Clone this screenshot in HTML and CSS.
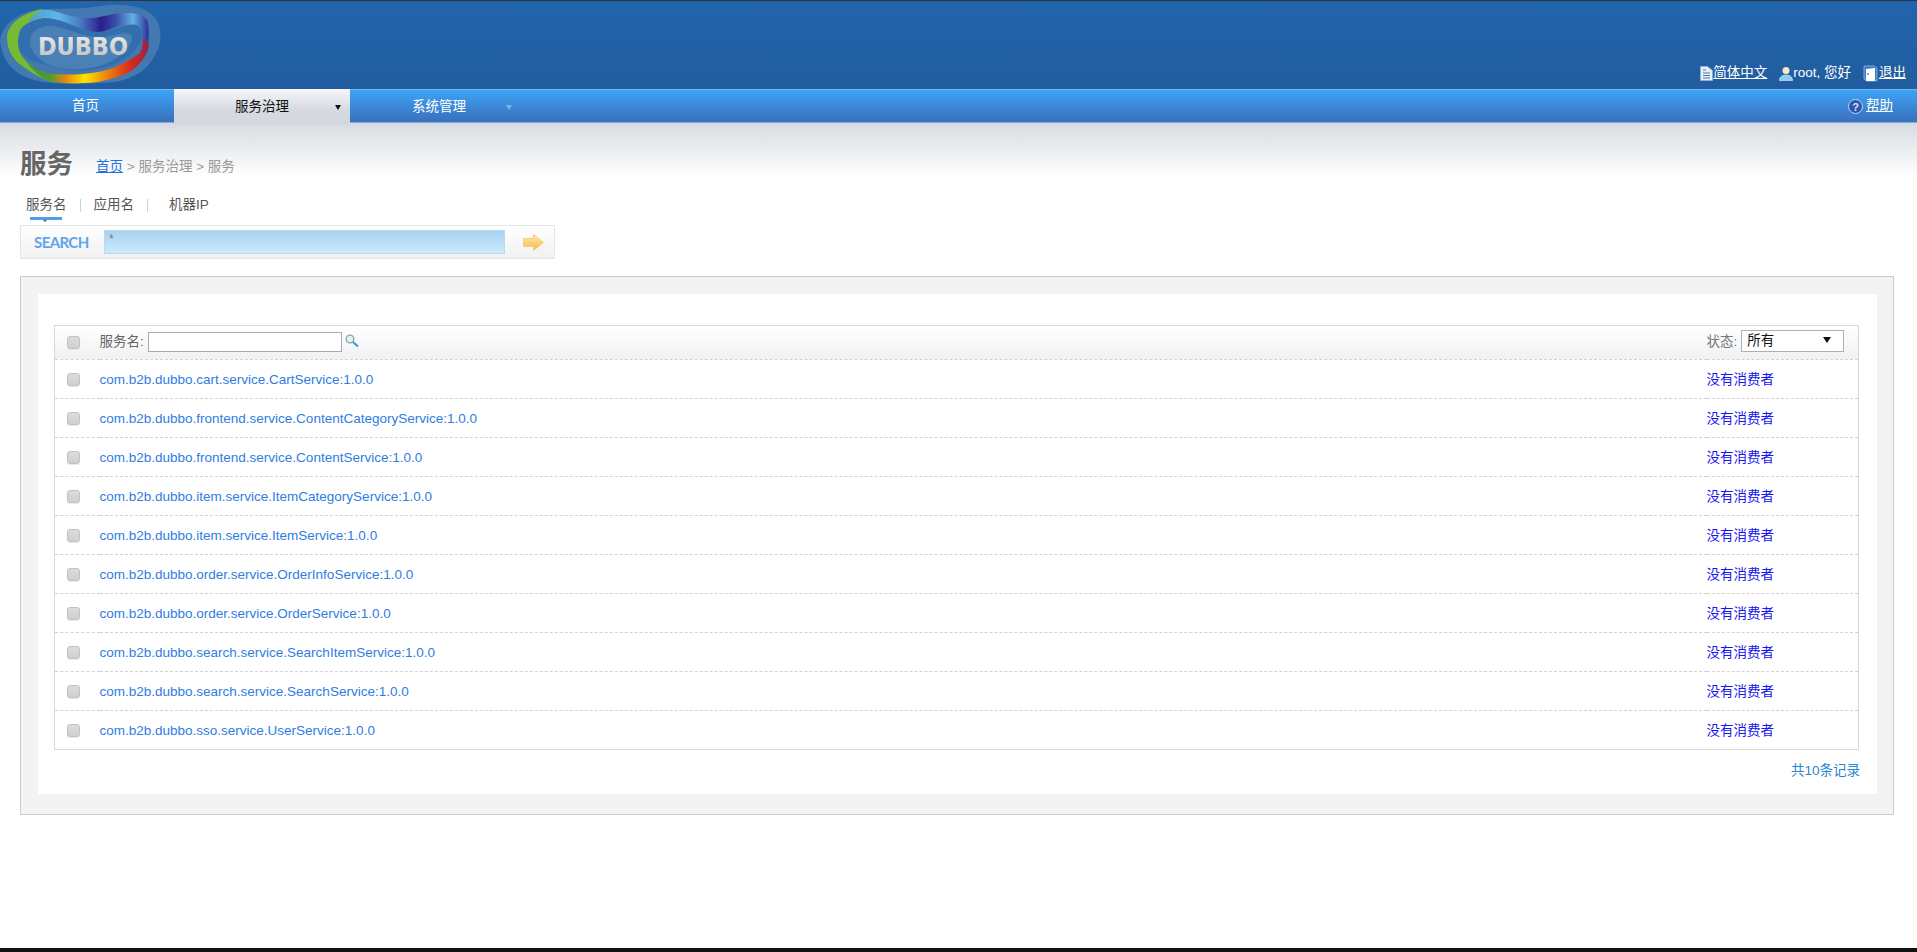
FILE: index.html
```html
<!DOCTYPE html>
<html lang="zh-CN">
<head>
<meta charset="utf-8">
<title>Dubbo Admin</title>
<link rel="stylesheet" href="styles.css">
</head>
<body>
<div class="page">
  <header class="header">
    <svg class="logo" viewBox="0 0 165 88" width="165" height="88" aria-label="Dubbo logo">
      <defs>
        <linearGradient id="ring" x1="25" y1="0" x2="150" y2="0" gradientUnits="userSpaceOnUse">
          <stop offset="0" stop-color="#3d9a38"/>
          <stop offset=".2" stop-color="#4f9a30"/>
          <stop offset=".32" stop-color="#e8860c"/>
          <stop offset=".48" stop-color="#ffe200"/>
          <stop offset=".68" stop-color="#e8760f"/>
          <stop offset=".85" stop-color="#d62a1a"/>
          <stop offset="1" stop-color="#8c2550"/>
        </linearGradient>
        <linearGradient id="band" x1="28" y1="0" x2="150" y2="0" gradientUnits="userSpaceOnUse">
          <stop offset="0" stop-color="#4f9fd0"/>
          <stop offset=".25" stop-color="#5fb6e4"/>
          <stop offset=".42" stop-color="#4a7fc4"/>
          <stop offset=".6" stop-color="#2a1e8c"/>
          <stop offset=".72" stop-color="#3a4fa8"/>
          <stop offset=".86" stop-color="#62b2e2"/>
          <stop offset="1" stop-color="#2a2390"/>
        </linearGradient>
        <linearGradient id="dubboText" x1="0" y1="0" x2="0" y2="1">
          <stop offset="0" stop-color="#f0f0f0"/>
          <stop offset="1" stop-color="#bdbdbd"/>
        </linearGradient>
      </defs>
      <path d="M0 40C3 22 22 10 44 9c20-1 32 1 56-3 20-3 46-1 55 12 9 12 7 30-5 45-12 15-31 20-51 20-24 1-50 2-68-4C12 73 2 60 0 40z" fill="#4378b0"/>
      <path d="M18 43c0-14 8-24 25-25 20-1 36 14 54 14 16 0 30-9 40-7 6 2 7 8 6 12-3 9-14 22-30 28-14 5-44 9-62 1C30 62 18 56 18 43z" fill="#336fae"/>
      <path d="M30 43c0-10 6-16 18-17 16-1 32 11 50 11 14 0 26-6 32-3 4 3 1 11-4 16-10 11-26 18-46 19-16 1-30-1-40-10-6-5-10-10-10-16z" fill="#4a80b5"/>
      <path d="M42 9C24 13 7 23 7 38c0 14 8 24 18 30 8 6 18 11 27 14C46 78 36 70 25 60c-5-6-7-11-7-17 0-6 1-9 2-13 3-5 12-10 23-12l-1-9z" fill="#76bb34"/>
      <path d="M25 60c5 5 12 10 18 12 12 3 28 3 40 2 12-1 22-3 30-6 12-5 22-11 27-15 2-4 3-10 3-16l6 6c0 8-4 15-11 22-6 6-14 11-24 13-10 3-20 5-30 5-10 1-20 0-32-1-12-4-21-13-27-22z" fill="url(#ring)"/>
      <path d="M28 23C32 15 37 11 43 10c8-1 16 3 24 5 8 2 17 3 26 3 10-1 20-5 30-5 7 0 13 0 17 2 5 2 8 5 8 8 1 6 1 13 0 20l-6-6c0-5-2-10-5-12-4-1-9 0-14 0-8 1-15 7-26 7-8 0-20-5-30-9-7-3-15-5-24-5-5 0-10 2-15 5z" fill="url(#band)"/>
      <text class="logo-text" x="38" y="55" textLength="90" lengthAdjust="spacingAndGlyphs" fill="url(#dubboText)">DUBBO</text>
    </svg>
    <div class="user-bar">
      <svg class="ico" viewBox="0 0 13 15" width="13" height="15"><path d="M.5.5h7l5 4v10H.5z" fill="#e8eef6" stroke="#8fb0d6"/><path d="M3 4h3M3 7h7M3 9.500h7M3 12h7" stroke="#4d78ad"/></svg>
      <a class="user-link" href="#">简体中文</a>
      <svg class="ico ico-user" viewBox="0 0 14 15" width="14" height="15"><circle cx="7" cy="4.500" r="3.500" fill="#f3e7c4"/><path d="M.5 14.500c0-4 3-5.500 6.500-5.500s6.500 1.500 6.500 5.500z" fill="#8ccbf2" stroke="#dfefff" stroke-width=".6"/></svg>
      <span class="user-name">root, 您好</span>
      <svg class="ico ico-door" viewBox="0 0 15 17" width="15" height="17"><path d="M1 1h10l3 2v13H4L1 14z" fill="#3f7dc0" stroke="#7eaadb"/><path d="M3 4l9-1v13H3z" fill="#fff"/><circle cx="5" cy="9" r=".9" fill="#4a79b0"/></svg>
      <a class="user-link" href="#">退出</a>
    </div>
  </header>

  <nav class="nav">
    <a class="nav-item nav-first" href="#">首页</a>
    <a class="nav-item nav-active" href="#">服务治理<i class="caret caret-dark"></i></a>
    <a class="nav-item nav-third" href="#">系统管理<i class="caret caret-pale"></i></a>
    <a class="nav-help" href="#">
      <svg class="ico" viewBox="0 0 15 15" width="15" height="15"><circle cx="7.500" cy="7.500" r="7" fill="#2f55ad" stroke="#c4d6ef"/><text class="help-q" x="7.500" y="11.500" text-anchor="middle">?</text></svg>
      <span class="help-text">帮助</span>
    </a>
  </nav>

  <main class="content">
    <div class="title-row">
      <h1 class="title">服务</h1>
      <div class="crumbs"><a class="crumb-link" href="#">首页</a> &gt; 服务治理 &gt; 服务</div>
    </div>

    <div class="tabs">
      <a class="tab tab-on" href="#">服务名</a>
      <i class="tab-sep"></i>
      <a class="tab tab-app" href="#">应用名</a>
      <i class="tab-sep"></i>
      <a class="tab tab-ip" href="#">机器IP</a>
    </div>

    <div class="search">
      <span class="search-label">SEARCH</span>
      <input class="search-input" type="text" value="*">
      <svg class="search-go" viewBox="0 0 21 17" width="21" height="17"><defs><linearGradient id="go" x1="0" y1="0" x2="0" y2="1"><stop offset="0" stop-color="#fff0b0"/><stop offset="1" stop-color="#f4b63e"/></linearGradient></defs><path d="M.5 4.500h10V.5l10 8-10 8v-4H.5z" fill="url(#go)" stroke="#f2cf7e"/></svg>
    </div>

    <section class="box">
      <div class="box-inner">
        <table class="grid">
          <thead>
            <tr class="head-row">
              <th class="c-check"><i class="check"></i></th>
              <th class="c-name">
                <div class="name-filter">
                  <span>服务名:</span>
                  <input class="filter-input" type="text">
                  <svg class="filter-go" viewBox="0 0 14 14" width="14" height="14"><circle cx="5" cy="5" r="3.800" fill="#e4f1f0" stroke="#7fa8a8" stroke-width="1.300"/><path d="M8 8l5 4.500" stroke="#4c96d6" stroke-width="2.200"/></svg>
                </div>
              </th>
              <th class="c-state">
                <div class="state-filter">
                  <span class="state-label">状态:</span>
                  <div class="select">所有<i class="caret caret-dark caret-select"></i></div>
                </div>
              </th>
            </tr>
          </thead>
          <tbody>
            <tr><td class="c-check"><i class="check"></i></td><td class="c-name"><a class="svc" href="#">com.b2b.dubbo.cart.service.CartService:1.0.0</a></td><td class="c-state"><a class="noc" href="#">没有消费者</a></td></tr>
            <tr><td class="c-check"><i class="check"></i></td><td class="c-name"><a class="svc" href="#">com.b2b.dubbo.frontend.service.ContentCategoryService:1.0.0</a></td><td class="c-state"><a class="noc" href="#">没有消费者</a></td></tr>
            <tr><td class="c-check"><i class="check"></i></td><td class="c-name"><a class="svc" href="#">com.b2b.dubbo.frontend.service.ContentService:1.0.0</a></td><td class="c-state"><a class="noc" href="#">没有消费者</a></td></tr>
            <tr><td class="c-check"><i class="check"></i></td><td class="c-name"><a class="svc" href="#">com.b2b.dubbo.item.service.ItemCategoryService:1.0.0</a></td><td class="c-state"><a class="noc" href="#">没有消费者</a></td></tr>
            <tr><td class="c-check"><i class="check"></i></td><td class="c-name"><a class="svc" href="#">com.b2b.dubbo.item.service.ItemService:1.0.0</a></td><td class="c-state"><a class="noc" href="#">没有消费者</a></td></tr>
            <tr><td class="c-check"><i class="check"></i></td><td class="c-name"><a class="svc" href="#">com.b2b.dubbo.order.service.OrderInfoService:1.0.0</a></td><td class="c-state"><a class="noc" href="#">没有消费者</a></td></tr>
            <tr><td class="c-check"><i class="check"></i></td><td class="c-name"><a class="svc" href="#">com.b2b.dubbo.order.service.OrderService:1.0.0</a></td><td class="c-state"><a class="noc" href="#">没有消费者</a></td></tr>
            <tr><td class="c-check"><i class="check"></i></td><td class="c-name"><a class="svc" href="#">com.b2b.dubbo.search.service.SearchItemService:1.0.0</a></td><td class="c-state"><a class="noc" href="#">没有消费者</a></td></tr>
            <tr><td class="c-check"><i class="check"></i></td><td class="c-name"><a class="svc" href="#">com.b2b.dubbo.search.service.SearchService:1.0.0</a></td><td class="c-state"><a class="noc" href="#">没有消费者</a></td></tr>
            <tr><td class="c-check"><i class="check"></i></td><td class="c-name"><a class="svc" href="#">com.b2b.dubbo.sso.service.UserService:1.0.0</a></td><td class="c-state"><a class="noc" href="#">没有消费者</a></td></tr>
          </tbody>
        </table>
        <div class="records">共10条记录</div>
      </div>
    </section>
  </main>
  <div class="taskbar"></div>
</div>
</body>
</html>
```
FILE: styles.css
```css
* { box-sizing: border-box; }
html, body { margin: 0; padding: 0; height: 100%; overflow: hidden; }
body { background: #fff; font: 13.5px/1.2 "Liberation Sans", "Noto Sans CJK SC", sans-serif; color: #666; }
a { text-decoration: none; }
.page { height: 100vh; display: flex; flex-direction: column; }

.header { flex: none; height: 89px; border-top: 1px solid #2f3338; background: linear-gradient(#2165ad, #215c9f); display: flex; justify-content: space-between; align-items: flex-end; }
.logo { display: block; align-self: flex-start; margin-top: -1px; }
.logo-text { font: bold 24.500px "DejaVu Sans", sans-serif; }
.user-bar { display: flex; align-items: center; padding: 0 11px 7px 0; color: #fff; }
.user-link { color: #fff; text-decoration: underline; }
.user-name { margin-right: 12px; }
.ico { display: block; flex: none; }
.ico-user { margin-left: 12px; }
.ico-door { margin-right: 1px; }

.nav { flex: none; height: 34px; display: flex; align-items: flex-start; background: linear-gradient(#3da3f5, #3a70bc); border-top: 1px solid #6cb6f2; border-bottom: 1px solid #7aaee0; }
.nav-item { width: 174px; height: 32px; display: flex; align-items: center; justify-content: center; color: #fff; position: relative; }
.nav-first { padding: 1px 3px 0 0; }
.nav-active { width: 176px; height: 36px; margin-top: -1px; color: #111; background: linear-gradient(#f5f6f8, #d5d9e1 60%, #d3d7e0); z-index: 1; }
.nav-third { width: 178px; padding-top: 3px; }
.caret { position: absolute; width: 0; height: 0; border-style: solid; border-width: 5px 3.500px 0; border-color: transparent; }
.caret-dark { border-top-color: #111; right: 9px; top: 16px; }
.caret-pale { border-top-color: #80b4e6; right: 16px; top: 15px; }
.nav-help { margin-left: auto; height: 32px; padding: 1px 24px 0 0; display: flex; align-items: center; gap: 3px; color: #fff; }
.help-text { text-decoration: underline; }
.help-q { font: bold 11px "Liberation Sans", sans-serif; fill: #d8e4f5; }

.content { flex: 1; min-height: 0; background: linear-gradient(#d7dbe1, #fff 54px) no-repeat; padding-top: 26px; }
.title-row { display: flex; align-items: flex-end; padding-left: 20px; height: 30px; }
.title { margin: 0; font: bold 26.500px/30px "Liberation Sans", "Noto Sans CJK SC", sans-serif; color: #666; }
.crumbs { margin-left: 23px; line-height: 18px; color: #999; padding-bottom: 3px; }
.crumb-link { color: #1f74d6; text-decoration: underline; }

.tabs { margin-top: 17px; height: 24px; padding-left: 26px; display: flex; align-items: flex-start; line-height: 18px; color: #555; }
.tab { color: #555; position: relative; }
.tab-on::after { content: ""; position: absolute; left: 4px; right: 5px; top: 21px; height: 3px; background: #4e9fe6; }
.tab-on::before { content: ""; position: absolute; left: 17px; top: 24px; border-style: solid; border-width: 2px 2px 0; border-color: #3c6a94 transparent transparent; }
.tab-sep { width: 1px; height: 13px; margin: 3px 13px; background: #d2d2d2; }
.tab-ip { margin-left: 8px; }

.search { margin: 5px 0 0 20px; width: 535px; height: 34px; display: flex; align-items: center; padding: 0 10px 0 13px; background: linear-gradient(#fff, #f1f1f1); border: 1px solid #e6e6e6; }
.search-label { width: 70px; flex: none; font: bold 15px "Lato", sans-serif; letter-spacing: -.6px; color: #5ea5ec; }
.search-input { width: 401px; height: 24px; padding: 0 4px 6px; border: 1px solid #b9daf2; background: linear-gradient(#a9d1f1, #cbebfc); color: #777; font: 12px "Liberation Sans", sans-serif; outline: none; }
.search-go { margin-left: 18px; }

.box { margin: 17px 23px 0 20px; border: 1px solid #ccc; background: #f2f4f3; padding: 17px 16px 20px 17px; }
.box-inner { background: #fff; padding: 31px 18px 0 16px; height: 500px; }
.grid { width: 100%; border-collapse: collapse; table-layout: fixed; border: 1px solid #d8d8d8; }
.head-row { height: 34px; background: linear-gradient(#fff, #eff1f3); }
.head-row th { font-weight: normal; text-align: left; padding: 0; }
.grid tr { border-bottom: 1px dashed #d2d2d2; }
.grid td { height: 39px; padding: 0; }
.grid td.c-name, .grid td.c-state { padding-top: 2px; }
.c-check { width: 45px; padding-left: 12px !important; }
.c-state { width: 152px; }
.check { display: block; width: 13px; height: 13px; border: 1px solid #c2c2c2; border-radius: 3px; background: linear-gradient(#dcdcdc, #cfcfcf); box-shadow: 0 1px 1px #e8e8e8; }
.name-filter { display: flex; align-items: center; color: #666; }
.filter-input { width: 194px; height: 20px; margin: -2px 0 0 4px; border: 1px solid #aaa; background: #fff; padding: 0; outline: none; }
.filter-go { margin: -4px 0 0 3px; }
.state-filter { display: flex; align-items: center; }
.state-label { color: #777; }
.select { width: 103px; height: 22px; margin: -3px 0 0 4px; padding-left: 5px; border: 1px solid #b0b0b0; background: #fff; color: #111; line-height: 20px; position: relative; }
.caret-select { right: 12px; top: 6px; border-width: 6px 4px 0; }
.svc { color: #2f7de2; }
.noc { color: #1515f0; }
.records { margin: 13px -1px 0 0; text-align: right; color: #2a85cf; }

.taskbar { flex: none; height: 4px; margin-top: auto; background: #111; }
```
